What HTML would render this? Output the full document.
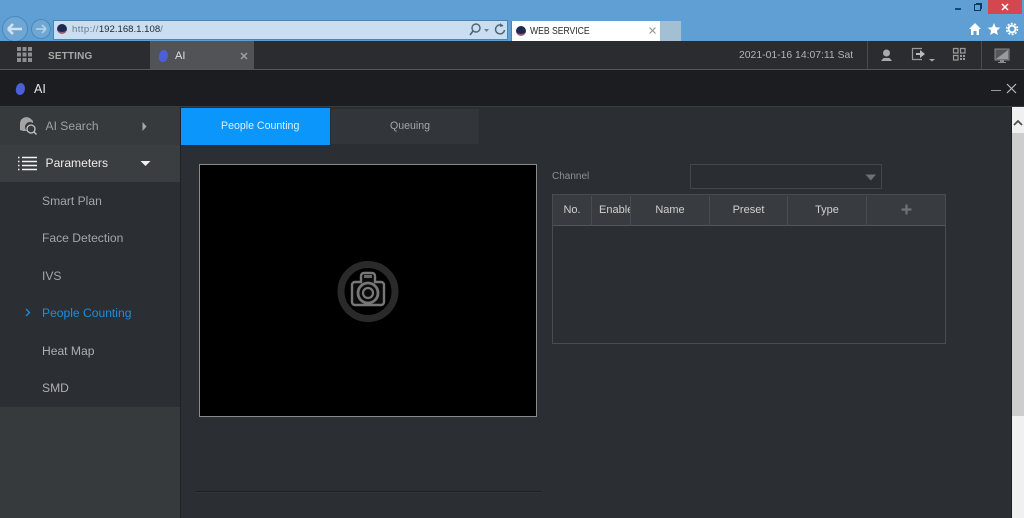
<!DOCTYPE html>
<html><head><meta charset="utf-8"><style>
html,body{margin:0;padding:0;width:1024px;height:518px;overflow:hidden;background:#2b2e32;font-family:"Liberation Sans",sans-serif}
div,span,svg{position:absolute;box-sizing:border-box}
.t{white-space:nowrap;line-height:16px}
.s{font-size:12.100px}
.h{top:196px;height:30px;border-right:1px solid #4a4d50;color:#d0d0d0;font-size:11px;line-height:29px;text-align:center;overflow:hidden}
</style></head><body>
<!-- browser chrome -->
<div style="left:0;top:0;width:1024px;height:41px;background:#5f9fd3"></div>
<svg style="left:0;top:13px" width="54" height="28" viewBox="0 0 54 28">
<circle cx="15" cy="16" r="12.500" fill="#6ea6d4" stroke="#4a89ba"/>
<path d="M8 16H22M8 16l5-5M8 16l5 5" stroke="#cfe2f0" stroke-width="2.600" fill="none"/>
<circle cx="41" cy="16" r="9.500" fill="#6ea6d4" stroke="#4a89ba"/>
<path d="M36 16H46M46 16l-4-4M46 16l-4 4" stroke="#b4d0e6" stroke-width="1.800" fill="none"/>
</svg>
<div style="left:53px;top:20px;width:455px;height:20px;background:#c9def0;border:1px solid #4a84b2"></div>
<div style="left:57px;top:24px;width:10px;height:10px;border-radius:5px;background:#1c2a52;border-bottom:2px solid #a05a70"></div>
<div class="t" style="left:72px;top:22px;font-size:9.600px;color:#6a7a88"><span style="position:static;letter-spacing:.4px">http://</span><span style="position:static;color:#222c36">192.168.1.108</span>/</div>
<svg style="left:468px;top:22px" width="40" height="16" viewBox="0 0 40 16">
<circle cx="8" cy="6" r="4" fill="none" stroke="#4a6478" stroke-width="1.400"/><path d="M5 9l-3 4" stroke="#4a6478" stroke-width="1.600"/>
<path d="M16 7h5l-2.500 3z" fill="#6a8294"/>
<path d="M35 4a4.500 4.500 0 1 0 1.500 4" fill="none" stroke="#4a6478" stroke-width="1.400"/><path d="M32 1l3 3-3 1z" fill="#4a6478"/>
</svg>
<div style="left:511px;top:21px;width:149px;height:20px;background:#fff;border-left:1px solid #4a84b2"></div>
<div style="left:516px;top:26px;width:10px;height:10px;border-radius:5px;background:#1c2a52;border-bottom:2px solid #a05a70"></div>
<div class="t" style="left:530px;top:23px;font-size:10.500px;color:#2a2a2a;transform:scaleX(.82);transform-origin:0 0">WEB SERVICE</div>
<svg style="left:648px;top:26px" width="9" height="9"><path d="M1.500 1.500l6 6M7.500 1.500l-6 6" stroke="#999" stroke-width="1.200"/></svg>
<div style="left:660px;top:21px;width:21px;height:20px;background:#a3bfd3"></div>
<!-- window controls -->
<div style="left:955px;top:8px;width:6px;height:2px;background:#0f4a7c"></div>
<div style="left:974px;top:4px;width:7px;height:7px;border:1px solid #0f3a5c"></div>
<div style="left:976px;top:3px;width:6px;height:6px;border:1px solid #0f3a5c;border-left:0;border-bottom:0"></div>
<div style="left:988px;top:0;width:34px;height:14px;background:#d2484e"></div>
<svg style="left:1001px;top:3px" width="8" height="8"><path d="M1 1l6 6M7 1l-6 6" stroke="#fff" stroke-width="1.500"/></svg>
<svg style="left:968px;top:22px" width="52" height="15" viewBox="0 0 52 15">
<path d="M1 7l6-6 6 6h-2v6H8.500V9h-3v4H3V7z" fill="#fff"/>
<path d="M26 1l1.800 4.200 4.500.4-3.400 3 1 4.400-3.900-2.300-3.900 2.300 1-4.400-3.400-3 4.500-.4z" fill="#fff"/>
<circle cx="44" cy="7" r="3.500" fill="none" stroke="#fff" stroke-width="2"/><circle cx="44" cy="7" r="5.500" fill="none" stroke="#fff" stroke-width="1.500" stroke-dasharray="2 1.500"/>
</svg>
<!-- app top bar -->
<div style="left:0;top:41px;width:1024px;height:29px;background:#2b2c2f;border-bottom:1px solid #55575a"></div>
<svg style="left:17px;top:47px" width="15" height="15"><path d="M0 0h4v4H0zM5.500 0h4v4h-4zM11 0h4v4h-4zM0 5.500h4v4H0zM5.500 5.500h4v4h-4zM11 5.500h4v4h-4zM0 11h4v4H0zM5.500 11h4v4h-4zM11 11h4v4h-4z" fill="#8e8e8e"/></svg>
<div class="t" style="left:48px;top:49px;font-size:10px;font-weight:bold;color:#a8a8a8;letter-spacing:.15px">SETTING</div>
<div style="left:150px;top:41px;width:104px;height:28px;background:#525356"></div>
<div style="left:159px;top:50px;width:9px;height:12px;border-radius:50% 60% 50% 50%;background:#4c5ed8;transform:rotate(15deg)"></div>
<div class="t" style="left:175px;top:48px;font-size:11px;color:#e0e0e0">AI</div>
<svg style="left:240px;top:52px" width="8" height="8"><path d="M1 1l6 6M7 1l-6 6" stroke="#a0a0a0" stroke-width="1.500"/></svg>
<div class="t" style="left:739px;top:48px;font-size:10.400px;color:#b4b4b4">2021-01-16 14:07:11 Sat</div>
<div style="left:867px;top:41px;width:1px;height:28px;background:#4a4b4e"></div>
<div style="left:981px;top:41px;width:1px;height:28px;background:#4a4b4e"></div>
<svg style="left:878px;top:46px" width="134" height="20" viewBox="0 0 134 20">
<circle cx="8.500" cy="7" r="3.500" fill="#aaa"/><path d="M3 15l2.500-3h6l2.500 3z" fill="#aaa"/>
<path d="M44 2.500h-9.500v11H44" fill="none" stroke="#9a9a9a" stroke-width="1.200"/>
<path d="M38 7h4V4l5 4-5 4V9h-4z" fill="#bbb"/>
<path d="M51 13h6l-3 2.500z" fill="#aaa"/>
<path d="M75.500 2.500h4.500V7h-4.500zM82.500 2.500H87V7h-4.500zM75.500 9.500h4.500V14h-4.500z" fill="none" stroke="#9a9a9a" stroke-width="1.200"/>
<path d="M82 9h2v2h-2zM85 9h2v2h-2zM82 12h2v2h-2zM85 12h2v2h-2z" fill="#9a9a9a"/>
<path d="M117 3h14v11h-14z" fill="#55575a" stroke="#8a8a8a"/><path d="M118 13L130 4v9z" fill="#9a9a9a"/>
<path d="M122 14h4v2h2v1h-8v-1h2z" fill="#8a8a8a"/>
</svg>
<!-- AI header -->
<div style="left:0;top:70px;width:1024px;height:37px;background:#1b1d20;border-bottom:1px solid #3a3c3f"></div>
<div style="left:16px;top:83px;width:9px;height:12px;border-radius:50% 60% 50% 50%;background:#4c5ed8;transform:rotate(15deg)"></div>
<div class="t" style="left:34px;top:81px;font-size:12.500px;color:#e8e8e8">AI</div>
<div style="left:991px;top:90px;width:10px;height:1px;background:#9a9a9a"></div>
<svg style="left:1006px;top:83px" width="11" height="11"><path d="M1 1l9 9M10 1l-9 9" stroke="#bbb" stroke-width="1.200"/></svg>
<!-- sidebar -->
<div style="left:0;top:107px;width:180px;height:411px;background:#373a3d"></div>
<div style="left:0;top:145px;width:180px;height:37px;background:#3b3e41"></div>
<div style="left:0;top:182px;width:180px;height:225px;background:#2b2e33"></div>
<div style="left:180px;top:107px;width:1px;height:411px;background:#1f2226"></div>
<svg style="left:18px;top:116px" width="20" height="20" viewBox="0 0 20 20">
<path d="M2 14V8a6.500 6.500 0 0 1 11-5l2 2v2a5 5 0 0 0-7 7l1 1H5z" fill="#a2a4a6"/>
<circle cx="13" cy="13" r="4" fill="none" stroke="#c4c4c4" stroke-width="1.300"/><path d="M16 16l2.500 2.500" stroke="#c4c4c4" stroke-width="1.300"/>
</svg>
<div class="t s" style="left:45.500px;top:117.500px;color:#9ea0a2">AI Search</div>
<svg style="left:141px;top:121px" width="7" height="11"><path d="M1.500 1l4 4.500-4 4.500z" fill="#a8a8a8"/></svg>
<svg style="left:18px;top:156px" width="20" height="15" viewBox="0 0 20 15">
<path d="M0 1.500h1.500M4 1.500h15M0 5.500h1.500M4 5.500h15M0 9.500h1.500M4 9.500h15M0 13.500h1.500M4 13.500h15" stroke="#f2f2f2" stroke-width="1.600"/>
</svg>
<div class="t s" style="left:45.500px;top:155px;color:#ececec">Parameters</div>
<svg style="left:140px;top:160px" width="11" height="7"><path d="M.5 1h10l-5 5z" fill="#f0f0f0"/></svg>
<div class="t s" style="left:42px;top:192.500px;color:#a4a6a8">Smart Plan</div>
<div class="t s" style="left:42px;top:230px;color:#a4a6a8">Face Detection</div>
<div class="t s" style="left:42px;top:267.500px;color:#a4a6a8">IVS</div>
<svg style="left:25px;top:308px" width="6" height="9"><path d="M1 1l3.500 3.500L1 8" fill="none" stroke="#1a8fe0" stroke-width="1.300"/></svg>
<div class="t s" style="left:42px;top:305px;color:#1a8fe0">People Counting</div>
<div class="t s" style="left:42px;top:342.500px;color:#acaeb0">Heat Map</div>
<div class="t s" style="left:42px;top:380px;color:#acaeb0">SMD</div>
<!-- tabs -->
<div style="left:181px;top:108px;width:149px;height:37px;background:#0a96fa"></div>
<div class="t" style="left:221px;top:117.500px;font-size:10.600px;color:#dcf0ff">People Counting</div>
<div style="left:330px;top:108px;width:150px;height:37px;background:#32353a;border:1px solid #2a2d31"></div>
<div class="t" style="left:390px;top:118px;font-size:10.600px;color:#a4a6a8">Queuing</div>
<!-- video -->
<div style="left:199px;top:164px;width:338px;height:253px;background:#000;border:1px solid #8a8a8a"></div>
<svg style="left:335px;top:259px" width="66" height="66" viewBox="0 0 66 66">
<circle cx="33" cy="32.500" r="27" fill="none" stroke="#2a2a2a" stroke-width="7"/>
<path d="M20 23h6v-6a3 3 0 0 1 3-3h8a3 3 0 0 1 3 3v6h6a3 3 0 0 1 3 3v17a3 3 0 0 1-3 3H20a3 3 0 0 1-3-3V26a3 3 0 0 1 3-3z" fill="#0a0a0a" stroke="#777" stroke-width="2.400"/>
<circle cx="33" cy="34" r="10" fill="none" stroke="#777" stroke-width="2.800"/><circle cx="33" cy="34" r="5" fill="none" stroke="#777" stroke-width="2.200"/>
<rect x="29" y="16" width="8" height="3" fill="#666"/>
</svg>
<div style="left:196px;top:491px;width:346px;height:1px;background:#1d2023"></div>
<div style="left:196px;top:492px;width:346px;height:1px;background:#32353a"></div>
<!-- channel -->
<div class="t" style="left:552px;top:169px;font-size:10px;color:#8e9092">Channel</div>
<div style="left:690px;top:164px;width:192px;height:25px;background:#2a2d31;border:1px solid #44474a"></div>
<svg style="left:865px;top:174px" width="12" height="7"><path d="M.5 .5h10.500l-5.250 6z" fill="#6e7072"/></svg>
<!-- table -->
<div style="left:552px;top:194px;width:394px;height:150px;background:#2b2e32;border:1px solid #4a4d50"></div>
<div style="left:553px;top:195px;width:392px;height:31px;background:#383b3f;border-bottom:1px solid #53565a"></div>
<div class="h" style="left:553px;width:39px">No.</div>
<div class="h" style="left:592px;width:39px;text-align:left;padding-left:7px">Enable</div>
<div class="h" style="left:631px;width:79px">Name</div>
<div class="h" style="left:710px;width:78px">Preset</div>
<div class="h" style="left:788px;width:79px">Type</div>
<svg style="left:901px;top:204px" width="11" height="11"><path d="M5.500 .5v10M.5 5.500h10" stroke="#6f7276" stroke-width="2.200"/></svg>
<!-- scrollbar -->
<div style="left:1011px;top:107px;width:1px;height:411px;background:#1b1d20"></div>
<div style="left:1012px;top:107px;width:12px;height:411px;background:#f0f0f0"></div>
<div style="left:1012px;top:133px;width:12px;height:283px;background:#cdcdcd"></div>
<svg style="left:1013px;top:119px" width="10" height="7"><path d="M1 6l4-4 4 4" fill="none" stroke="#505050" stroke-width="1.800"/></svg>
</body></html>
